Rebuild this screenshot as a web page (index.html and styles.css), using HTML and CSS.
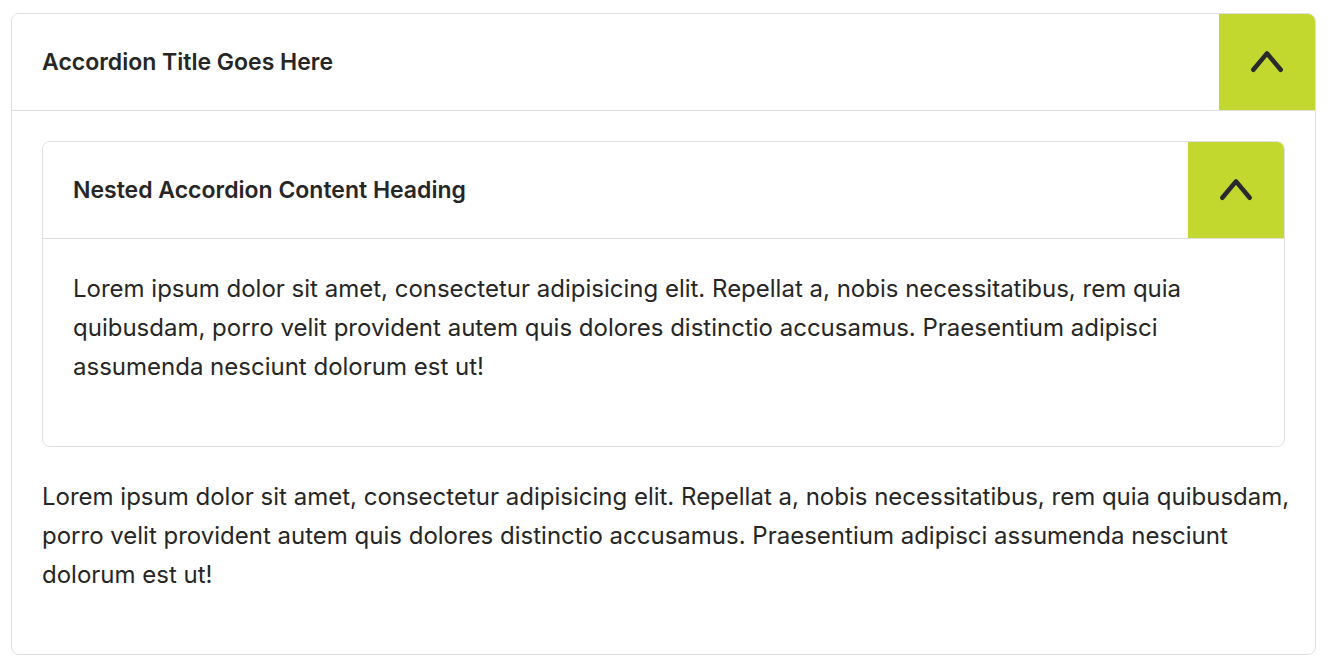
FILE: index.html
```html
<!DOCTYPE html>
<html lang="en">
<head>
<meta charset="utf-8">
<meta name="viewport" content="width=device-width, initial-scale=1">
<title>Accordion</title>
<link rel="stylesheet" href="styles.css">
</head>
<body>
<main class="page">
  <section class="accordion">
    <h2 class="accordion-heading">
      <button class="accordion-toggle" type="button" aria-expanded="true" aria-controls="outer-panel">
        <span class="accordion-title">Accordion Title Goes Here</span>
        <span class="accordion-icon"><svg width="34" height="24" viewBox="0 0 34 24" aria-hidden="true"><path d="M3.3 19.8 L17 3.4 L30.7 19.8"/></svg></span>
      </button>
    </h2>
    <div class="accordion-panel" id="outer-panel">
      <section class="accordion">
        <h3 class="accordion-heading">
          <button class="accordion-toggle" type="button" aria-expanded="true" aria-controls="nested-panel">
            <span class="accordion-title">Nested Accordion Content Heading</span>
            <span class="accordion-icon"><svg width="34" height="24" viewBox="0 0 34 24" aria-hidden="true"><path d="M3.3 19.8 L17 3.4 L30.7 19.8"/></svg></span>
          </button>
        </h3>
        <div class="accordion-panel" id="nested-panel">
          <p class="accordion-text">Lorem ipsum dolor sit amet, consectetur adipisicing elit. Repellat a, nobis necessitatibus, rem quia quibusdam, porro velit provident autem quis dolores distinctio accusamus. Praesentium adipisci assumenda nesciunt dolorum est ut!</p>
        </div>
      </section>
      <p class="accordion-text">Lorem ipsum dolor sit amet, consectetur adipisicing elit. Repellat a, nobis necessitatibus, rem quia quibusdam, porro velit provident autem quis dolores distinctio accusamus. Praesentium adipisci assumenda nesciunt dolorum est ut!</p>
    </div>
  </section>
</main>
</body>
</html>
```
FILE: styles.css
```css
* { box-sizing: border-box; }
body {
  margin: 0;
  background: #fff;
  color: #262626;
  font-family: Inter, "Liberation Sans", sans-serif;
}
.page { padding: 13px 12px 13px 11px; }
.accordion {
  border: 1px solid #e0e0e0;
  border-radius: 8px;
  overflow: hidden;
}
.accordion-heading { margin: 0; }
.accordion-toggle {
  display: flex;
  align-items: center;
  justify-content: space-between;
  width: 100%;
  padding: 0 0 0 30px;
  border: 0;
  border-bottom: 1px solid #e0e0e0;
  background: #fff;
  color: inherit;
  font: 600 23px/39px Inter, "Liberation Sans", sans-serif;
  text-align: left;
  cursor: pointer;
}
.accordion-icon {
  display: grid;
  place-items: center;
  width: 96px;
  height: 96px;
  background: #c2d82e;
}
.accordion-icon path {
  fill: none;
  stroke: #2a2a2a;
  stroke-width: 4.6;
  stroke-linecap: round;
  stroke-linejoin: round;
}
.accordion-panel {
  display: grid;
  gap: 30px;
  padding: 30px 30px 60px;
}
.accordion-text {
  margin: 0 -10px 0 0;
  font-size: 24px;
  line-height: 39px;
}
```
